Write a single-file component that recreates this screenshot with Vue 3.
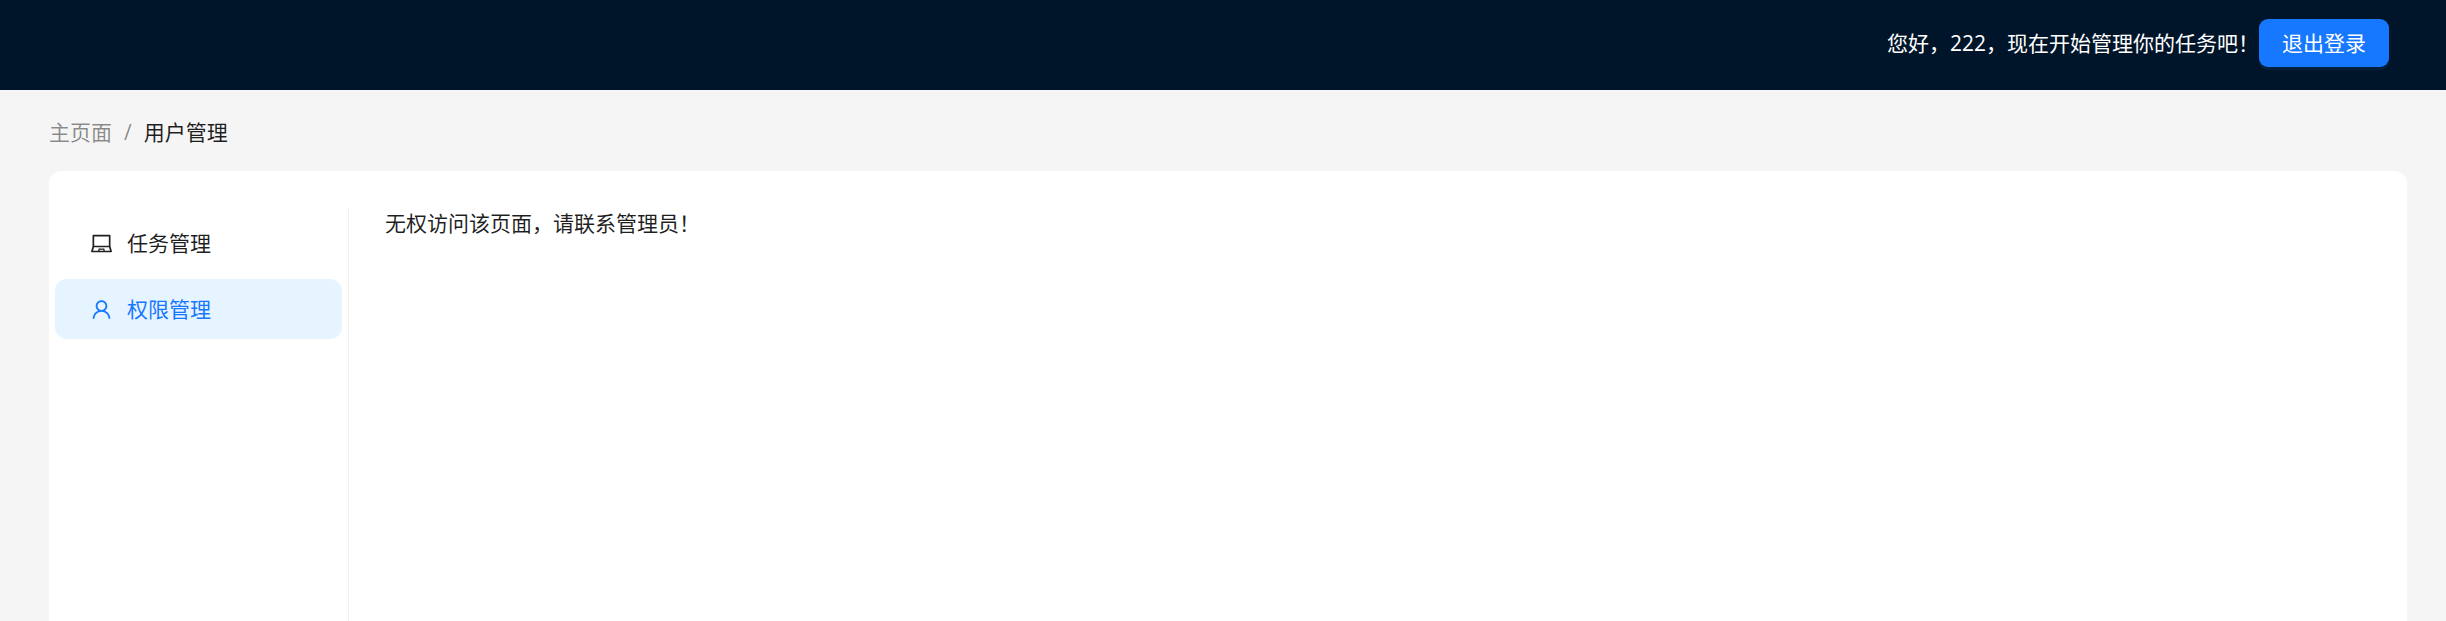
<script setup>
import { ref } from 'vue'

const user = '222'
const active = ref('auth')
const items = [
  {
    key: 'task',
    label: '任务管理',
    icon: 'M956.9 845.1L896.4 632V168c0-17.7-14.3-32-32-32h-704c-17.7 0-32 14.3-32 32v464L67.9 845.1C60.4 866 75.8 888 98 888h828.8c22.2 0 37.6-22 30.1-42.9zM200.4 208h624v395h-624V208zm228.3 608l8.1-37h150.3l8.1 37H428.7zm224 0l-19.1-86.7c-.8-3.7-4.1-6.3-7.8-6.3H398.2c-3.8 0-7 2.6-7.8 6.3L371.3 816H151l42.3-149h638.2l42.3 149H652.7z',
  },
  {
    key: 'auth',
    label: '权限管理',
    icon: 'M858.5 763.6a374 374 0 00-80.6-119.5 375.63 375.63 0 00-119.5-80.6c-.4-.2-.8-.3-1.2-.5C719.5 518 760 444.7 760 362c0-137-111-248-248-248S264 225 264 362c0 82.7 40.5 156 102.8 201.1-.4.2-.8.3-1.2.5-44.8 18.9-85 46-119.5 80.6a375.63 375.63 0 00-80.6 119.5A371.7 371.7 0 00136 901.8a8 8 0 008 8.2h60c4.4 0 7.9-3.5 8-7.8 2-77.2 33-149.5 87.8-204.3 56.7-56.7 132-87.9 212.2-87.9s155.5 31.2 212.2 87.9C779 752.7 810 825 812 902.2c.1 4.4 3.6 7.8 8 7.8h60a8 8 0 008-8.2c-1-47.8-10.9-94.3-29.5-138.2zM512 534c-45.9 0-89.1-17.9-121.6-50.4S340 407.9 340 362c0-45.9 17.9-89.1 50.4-121.6S466.1 190 512 190s89.1 17.9 121.6 50.4S684 316.1 684 362c0 45.9-17.9 89.1-50.4 121.6S557.9 534 512 534z',
  },
]
</script>

<template>
  <div class="layout">
    <header class="header">
      <span class="greeting">您好，{{ user }}，现在开始管理你的任务吧！</span>
      <button type="button" class="logout">退出登录</button>
    </header>
    <div class="body">
      <nav class="breadcrumb" aria-label="breadcrumb">
        <a href="#" class="crumb">主页面</a>
        <span class="separator">/</span>
        <span class="current">用户管理</span>
      </nav>
      <div class="card">
        <nav class="sider">
          <a
            v-for="item in items"
            :key="item.key"
            href="#"
            class="item"
            :class="{ selected: active === item.key }"
            @click.prevent="active = item.key"
          >
            <svg class="icon" viewBox="64 64 896 896" aria-hidden="true">
              <path :d="item.icon" />
            </svg>
            <span>{{ item.label }}</span>
          </a>
        </nav>
        <main class="content">无权访问该页面，请联系管理员！</main>
      </div>
    </div>
  </div>
</template>

<style>
body {
  margin: 0;
}
</style>

<style scoped>
.layout {
  display: flex;
  flex-direction: column;
  min-height: 100vh;
  background: #f5f5f5;
  color: rgba(0, 0, 0, 0.88);
  font-family: "Open Sans", "Noto Sans CJK SC", sans-serif;
  font-size: 21px;
  font-weight: 400;
  line-height: 32px;
}
.header {
  display: flex;
  align-items: center;
  justify-content: flex-end;
  box-sizing: border-box;
  height: 90px;
  padding: 0 57px 4px 48px;
  background: #001529;
  color: #fff;
}
.logout {
  height: 48px;
  padding: 0 23px;
  border: 0;
  border-radius: 9px;
  background: #1677ff;
  box-shadow: 0 3px 0 rgba(5, 145, 255, 0.1);
  color: #fff;
  font: inherit;
  cursor: pointer;
}
.body {
  display: flex;
  flex: 1;
  flex-direction: column;
  padding: 0 39px 0 49px;
}
.breadcrumb {
  display: flex;
  gap: 12px;
  padding: 26px 0 23px;
}
.crumb,
.separator {
  color: rgba(0, 0, 0, 0.45);
  text-decoration: none;
}
.card {
  display: flex;
  flex: 1;
  padding-top: 36px;
  border-radius: 12px 12px 0 0;
  background: #fff;
}
.sider {
  flex: none;
  box-sizing: border-box;
  width: 300px;
  border-right: 1px solid #f0f0f0;
}
.item {
  display: flex;
  align-items: center;
  gap: 15px;
  height: 60px;
  margin: 6px;
  padding: 0 36px;
  border-radius: 12px;
  color: inherit;
  text-decoration: none;
}
.item.selected {
  background: #e6f4ff;
  color: #1677ff;
}
.icon {
  width: 21px;
  height: 21px;
  fill: currentColor;
}
.content {
  flex: 1;
  padding: 0 36px;
}
</style>
